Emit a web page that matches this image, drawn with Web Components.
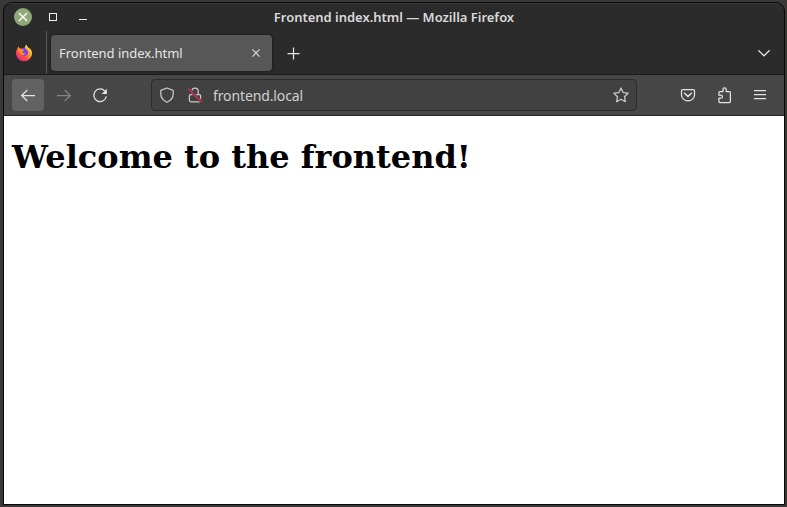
<!DOCTYPE html>
<html lang="en">
<head>
<meta charset="utf-8">
<title>Frontend index.html</title>
<style>
html,body{margin:0;height:100%}
body{background:#393837;overflow:hidden}
</style>
</head>
<body>
<browser-window>
  <title-bar slot="chrome">Frontend index.html — Mozilla Firefox</title-bar>
  <tab-strip slot="chrome"><browser-tab>Frontend index.html</browser-tab></tab-strip>
  <nav-toolbar slot="chrome"><url-bar>frontend.local</url-bar></nav-toolbar>
  <page-view><span>Welcome to the frontend!</span></page-view>
</browser-window>
<script>
const define = (name, html) => customElements.define(name, class extends HTMLElement {
  constructor() {
    super();
    this.attachShadow({mode: 'open'}).innerHTML = html;
  }
});

const icons = {
  close: '<path d="M4.4 4.4l7.2 7.2M11.6 4.4l-7.2 7.2"/>',
  plus: '<path d="M8.5 2.5v12M2.5 8.5h12"/>',
  chevron: '<path d="M2.3 5.3L8 10.8l5.7-5.5"/>',
  back: '<path d="M15 8.5H1.8M7.3 3L1.6 8.5l5.7 5.5"/>',
  forward: '<path d="M1 8.5h13.2M8.7 3l5.7 5.5-5.7 5.5"/>',
  reload: '<path d="M12.9 4.2A6.3 6.3 0 1 0 14.3 9.3"/><path d="M14.9 1.8v5.2H9.7z" fill="currentColor" stroke="none"/>',
  shield: '<path d="M8 1L14.2 3.3V7c0 3.6-2.2 6.4-6.2 8.3C4 13.4 1.8 10.6 1.8 7V3.3z" stroke-linejoin="round"/>',
  lock: '<path d="M3.6 7.7h8.8q1.2 0 1.2 1.2v4.7q0 1.2-1.2 1.2H3.6q-1.2 0-1.2-1.2V8.9q0-1.2 1.2-1.2M4.8 7.5V4.2a3.2 3.2 0 0 1 6.4 0v3.3"/><path d="M1.2 1.8l13.3 13" stroke="#454545" stroke-width="3"/><path d="M1.2 1.8l13.6 13.2" stroke="#e22850" stroke-width="1.3"/>',
  star: '<path d="M8 1l2.15 4.55 4.95.65-3.62 3.5.9 5L8 12.3l-4.38 2.4.9-5L.9 6.2l4.95-.65z" stroke-linejoin="round"/>',
  pocket: '<path d="M3 2.6h10q1.5 0 1.5 1.5V8a6.5 5.8 0 0 1-13 0V4.1Q1.5 2.6 3 2.6z"/><path d="M4.6 6.3L8 9.5l3.4-3.2" stroke-width="1.5" stroke-linecap="round"/>',
  puzzle: '<path d="M2.9 5.5q0-1 1-1H7V2.4a1.6 1.6 0 0 1 3.2 0v2.1h3.2q1 0 1 1v9q0 1-1 1H3.9q-1 0-1-1v-3.3h2a1.5 1.5 0 0 0 0-3h-2z" stroke-linejoin="round"/>',
  menu: '<path d="M2 3.5h12M2 7.5h12M2 11.5h12"/>'
};

customElements.define('ui-icon', class extends HTMLElement {
  connectedCallback() {
    if (this.shadowRoot) return;
    this.attachShadow({mode: 'open'}).innerHTML = `
      <style>:host{display:block;width:16px;height:16px;flex:none}svg{display:block;width:100%;height:100%;overflow:visible}</style>
      <svg viewBox="0 0 16 16" fill="none" stroke="currentColor" stroke-width="1.25">${icons[this.getAttribute('name')]}</svg>`;
  }
});

define('fox-logo', `
  <style>:host{display:block;width:18px;height:18px}svg{display:block}</style>
  <svg width="18" height="18" viewBox="0 0 18 18">
    <defs>
      <linearGradient id="flame" x1=".85" y1=".1" x2=".2" y2=".95">
        <stop offset="0" stop-color="#fff44f"/><stop offset=".35" stop-color="#ffb22e"/>
        <stop offset=".65" stop-color="#ff513d"/><stop offset="1" stop-color="#e9208c"/>
      </linearGradient>
      <linearGradient id="mane" x1=".8" y1="0" x2=".4" y2="1">
        <stop offset="0" stop-color="#fff44f"/><stop offset=".5" stop-color="#ffa42a"/><stop offset="1" stop-color="#ff4b40"/>
      </linearGradient>
    </defs>
    <path d="M2.4 4.5L3.5 2.6 4.7 4.7 6 4.7 9 5 11.5 1c.2 1.5 1.5 2.5 2.6 3.7l.5-.4c1.8 1.6 2.4 3.4 2.4 5.2A8 7.8 0 0 1 1 9.4C1 7.5 1.5 6 2.4 4.5z" fill="url(#flame)"/>
    <path d="M6.5 4.8C8 3.2 10.5 3.4 12 5c2 2.4 1.6 5.2-.6 6.6-2 1-4.2.2-4.8-1.6z" fill="#7542e5"/>
    <path d="M3.6 4.9c1.2-.6 2.7-.4 3.7.5l2 .3C8.8 7 7.6 7 7.4 8.1c.4 1.2 2 1.8 3.6 1-1 2.2-3.3 2.8-5.2 1.4C3.8 9 3.4 6.8 3.6 4.9z" fill="#ff8a2b"/>
    <path d="M10 3.6c.5 2 3.8 2.8 3.4 6.3-.3 2.4-2.5 3.7-4.6 3.3 2.8 1.5 6.6-.6 6.8-4.1.1-1.8-.5-3.4-1.5-4.7C13 3.2 11.7 2.5 11.5.7 10.4 1.3 9.8 2.4 10 3.6z" fill="url(#mane)"/>
  </svg>`);

define('browser-window', `
  <style>
    :host{display:flex;flex-direction:column;box-sizing:border-box;width:782px;height:503px;margin:2px 0 0 3px;
      border:1px solid #090909;border-radius:9px 9px 0 0;overflow:hidden;background:#2b2b2b;
      font-family:"Noto Sans",sans-serif;color:#e4e4e4}
  </style><slot name="chrome"></slot><slot></slot>`);

define('title-bar', `
  <style>
    :host{display:grid;grid-template-columns:1fr auto 1fr;align-items:center;height:28px;flex:none;box-sizing:border-box;
      box-shadow:inset 0 1px #3b3b3b;font-size:13px;font-weight:600;color:#dadada;white-space:nowrap}
    .buttons{display:flex;align-items:center;padding-left:10px}
    .close{width:18px;height:18px;border-radius:50%;background:#8fa876;color:#fff;display:grid;place-items:center}
    .close ui-icon{width:18px;height:18px}
    .max{box-sizing:border-box;width:8px;height:8px;border:1px solid #eee;margin-left:17px}
    .min{width:8px;height:1px;background:#eee;margin:5px 0 0 22px}
    .title{letter-spacing:-.02px}
  </style>
  <div class="buttons"><div class="close"><ui-icon name="close"></ui-icon></div><div class="max"></div><div class="min"></div></div>
  <div class="title"><slot></slot></div><div></div>`);

define('tab-strip', `
  <style>
    :host{display:flex;height:44px;flex:none;box-sizing:border-box;border-bottom:1px solid #1b1b1b}
    .logo{width:43px;box-sizing:border-box;border-right:1px solid #565656;padding:13px 0 0 11px}
    .plus{margin:14px 0 0 13px}
    .more{margin:14px 12px 0 auto}
  </style>
  <div class="logo"><fox-logo></fox-logo></div>
  <slot></slot>
  <ui-icon class="plus" name="plus"></ui-icon><ui-icon class="more" name="chevron"></ui-icon>`);

define('browser-tab', `
  <style>
    :host{display:flex;align-items:center;justify-content:space-between;box-sizing:border-box;width:221px;height:36px;margin:4px 0 0 4px;
      padding:0 8px;border-radius:4px;background:#575757;box-shadow:0 0 3px #111;font-size:13px;color:#e6e6e6;white-space:nowrap}
    .label{letter-spacing:-.03px}
    ui-icon{color:#d0d0d0}
  </style>
  <span class="label"><slot></slot></span><ui-icon name="close"></ui-icon>`);

define('nav-toolbar', `
  <style>
    :host{display:flex;align-items:center;height:41px;flex:none;box-sizing:border-box;padding:0 16px 0 8px;background:#474747;
      border-bottom:1px solid #242424}
    .button{width:32px;height:32px;display:grid;place-items:center;border-radius:4px;margin-right:4px}
    .active{background:#626262}
    .disabled{color:#858585}
    .tools{display:flex;gap:20px;margin-left:auto}
  </style>
  <div class="button active"><ui-icon name="back"></ui-icon></div>
  <div class="button disabled"><ui-icon name="forward"></ui-icon></div>
  <div class="button"><ui-icon name="reload"></ui-icon></div>
  <slot></slot>
  <div class="tools"><ui-icon name="pocket"></ui-icon><ui-icon name="puzzle"></ui-icon><ui-icon name="menu"></ui-icon></div>`);

define('url-bar', `
  <style>
    :host{display:flex;align-items:center;box-sizing:border-box;width:486px;height:32px;margin-left:31px;padding:0 7px;
      border:1px solid #2b2b2b;border-radius:4px;background:#414141;color:#c9c9c9;font-size:14px}
    .lock{margin-left:12px}
    .url{margin-left:10px;color:#d0d0d0;letter-spacing:-.12px}
    .star{margin-left:auto}
  </style>
  <ui-icon name="shield"></ui-icon><ui-icon class="lock" name="lock"></ui-icon>
  <span class="url"><slot></slot></span><ui-icon class="star" name="star"></ui-icon>`);

define('page-view', `
  <style>
    :host{display:block;flex:1;box-sizing:border-box;padding:0 8px;background:#fff;color:#000;overflow:hidden}
    h1{margin:22px 0;font:bold 32px "DejaVu Serif",serif;white-space:nowrap}
  </style><h1><slot></slot></h1>`);
</script>
</body>
</html>
